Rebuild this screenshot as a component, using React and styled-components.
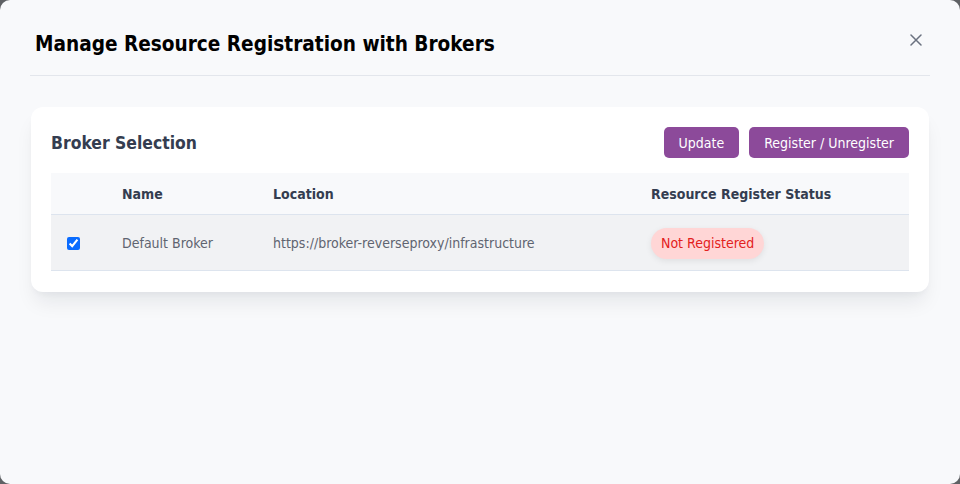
import styled, { createGlobalStyle } from "styled-components";

const GlobalStyle = createGlobalStyle`
  html, body {
    margin: 0;
    padding: 0;
    background: #5f6164;
  }
  body {
    font-family: "DejaVu Sans Condensed", "DejaVu Sans", sans-serif;
  }
  * {
    box-sizing: border-box;
  }
`;

const brokers = [
  {
    id: 1,
    name: "Default Broker",
    location: "https://broker-reverseproxy/infrastructure",
    registered: false,
    selected: true,
  },
];

function App() {
  return (
    <>
      <GlobalStyle />
      <Modal>
        <ModalHeader>
          <Title>Manage Resource Registration with Brokers</Title>
          <CloseButton aria-label="Close">
            <svg width="12" height="12" viewBox="0 0 12 12">
              <path
                d="M1 1 L11 11 M11 1 L1 11"
                stroke="currentColor"
                strokeWidth="1.5"
                strokeLinecap="round"
              />
            </svg>
          </CloseButton>
        </ModalHeader>

        <ModalBody>
          <Card>
            <CardHeader>
              <CardTitle>Broker Selection</CardTitle>
              <Actions>
                <ActionButton>Update</ActionButton>
                <ActionButton>Register / Unregister</ActionButton>
              </Actions>
            </CardHeader>

            <Table>
              <colgroup>
                <col style={{ width: 55 }} />
                <col style={{ width: 151 }} />
                <col style={{ width: 378 }} />
                <col />
              </colgroup>
              <thead>
                <tr>
                  <Th></Th>
                  <Th>Name</Th>
                  <Th>Location</Th>
                  <Th>Resource Register Status</Th>
                </tr>
              </thead>
              <tbody>
                {brokers.map((b) => (
                  <Row key={b.id}>
                    <Td>
                      <Checkbox type="checkbox" defaultChecked={b.selected} />
                    </Td>
                    <Td>{b.name}</Td>
                    <Td>{b.location}</Td>
                    <Td>
                      <StatusBadge registered={b.registered}>
                        {b.registered ? "Registered" : "Not Registered"}
                      </StatusBadge>
                    </Td>
                  </Row>
                ))}
              </tbody>
            </Table>
          </Card>
        </ModalBody>
      </Modal>
    </>
  );
}

export default App;

const Modal = styled.div`
  width: 960px;
  height: 484px;
  background: #f8f9fb;
  border-radius: 10px;
  overflow: hidden;
  display: flex;
  flex-direction: column;
`;

const ModalHeader = styled.div`
  display: flex;
  align-items: center;
  justify-content: space-between;
  margin: 0 30px;
  padding: 0 5px;
  height: 76px;
  border-bottom: 1px solid #e3e6ec;
`;

const Title = styled.h2`
  margin: 0;
  padding-top: 12px;
  font-size: 20.6px;
  font-weight: bold;
  color: #000;
`;

const CloseButton = styled.button`
  border: none;
  background: none;
  padding: 0;
  margin: 5px 3px 0 0;
  color: #6b7280;
  display: flex;
  cursor: pointer;
`;

const ModalBody = styled.div`
  padding: 31px;
`;

const Card = styled.div`
  background: #fff;
  border-radius: 12px;
  padding: 20px 20px 21px;
  box-shadow: 0 14px 20px -4px rgba(17, 24, 39, 0.08),
    0 4px 6px -2px rgba(17, 24, 39, 0.04);
`;

const CardHeader = styled.div`
  display: flex;
  align-items: center;
  justify-content: space-between;
  margin-bottom: 15px;
`;

const CardTitle = styled.h3`
  margin: 0;
  padding-top: 1px;
  font-size: 17.4px;
  font-weight: bold;
  color: #343d50;
`;

const Actions = styled.div`
  display: flex;
  gap: 10px;
`;

const ActionButton = styled.button`
  height: 31px;
  padding: 0 15px;
  border: none;
  border-radius: 5px;
  background: #8c4a9a;
  color: #fff;
  font-family: inherit;
  font-size: 14px;
  cursor: pointer;
`;

const Table = styled.table`
  width: 100%;
  border-collapse: collapse;
  table-layout: fixed;
  font-size: 14px;
`;

const Th = styled.th`
  height: 41px;
  padding: 2px 16px 0;
  text-align: left;
  font-weight: bold;
  color: #343d50;
  background: #f8f9fb;
  border-bottom: 1px solid #dde4ee;
`;

const Row = styled.tr`
  background: #f1f2f4;
`;

const Td = styled.td`
  height: 56px;
  padding: 2px 16px 0;
  color: #5f6470;
  border-bottom: 1px solid #dde4ee;
  vertical-align: middle;
`;

const Checkbox = styled.input`
  width: 13px;
  height: 13px;
  margin: 0;
  display: block;
  accent-color: #0a6cff;
`;

const StatusBadge = styled.span`
  display: inline-block;
  padding: 7px 10px;
  border-radius: 999px;
  background: ${(p) => (p.registered ? "#d7f5dd" : "#ffd6d6")};
  color: ${(p) => (p.registered ? "#1a7f37" : "#e3211c")};
  box-shadow: 0 2px 6px rgba(0, 0, 0, 0.08);
  line-height: 17px;
`;
